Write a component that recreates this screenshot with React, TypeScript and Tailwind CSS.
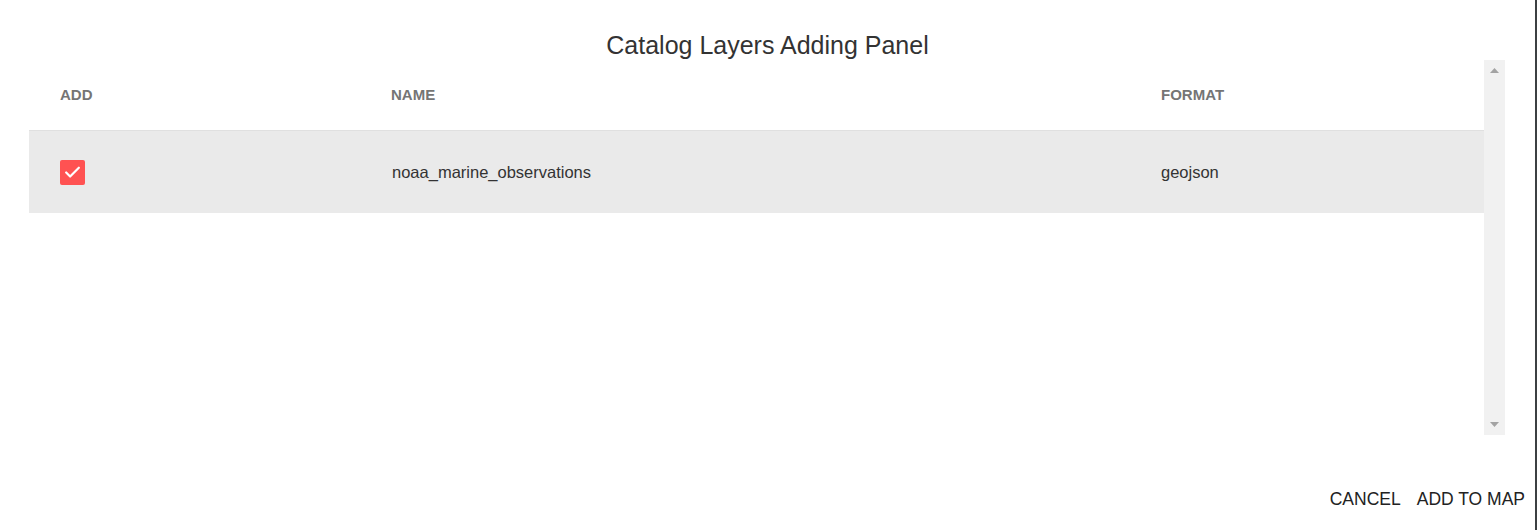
import { Check } from 'lucide-react'

const LAYERS = [{ name: 'noaa_marine_observations', format: 'geojson', checked: true }]

function ScrollTrack() {
  return (
    <div className="w-[21px] bg-[#f1f1f1] flex flex-col items-center justify-between py-[8px]">
      <svg width="9" height="5" viewBox="0 0 9 5">
        <path d="M0 5 L4.5 0 L9 5 Z" fill="#a3a3a3" />
      </svg>
      <svg width="9" height="5" viewBox="0 0 9 5">
        <path d="M0 0 L9 0 L4.5 5 Z" fill="#a3a3a3" />
      </svg>
    </div>
  )
}

export default function App() {
  return (
    <div className="h-[530px] w-full bg-white flex font-['Liberation_Sans',Arial,sans-serif]">
      <div className="flex-1 flex flex-col">
        <h2 className="text-center text-[25px] text-[#333] pt-[30px] leading-[30px]">Catalog Layers Adding Panel</h2>
        <div className="flex pl-[29px] pr-[30px] h-[375px]">
          <div className="flex-1">
            <div className="grid grid-cols-[332px_770px_1fr] h-[71px] items-center border-b border-[#e0e0e0] text-[15px] font-bold text-[#757575]">
              <div className="pl-[31px]">ADD</div>
              <div className="pl-[30px]">NAME</div>
              <div className="pl-[30px]">FORMAT</div>
            </div>
            {LAYERS.map((l) => (
              <div key={l.name} className="grid grid-cols-[332px_770px_1fr] h-[82px] items-center bg-[#eaeaea] text-[16.5px] text-[#333]">
                <div className="pl-[31px]">
                  <span className="w-[25px] h-[25px] rounded-[2px] bg-[#ff5252] flex items-center justify-center">
                    {l.checked && <Check className="w-[19px] h-[19px] text-white" strokeWidth={2.8} />}
                  </span>
                </div>
                <div className="pl-[31px]">{l.name}</div>
                <div className="pl-[30px]">{l.format}</div>
              </div>
            ))}
          </div>
          <ScrollTrack />
        </div>
        <div className="flex justify-end items-center gap-[16px] pr-[10px] mt-[51px] text-[17.5px] text-[#222]">
          <button type="button">CANCEL</button>
          <button type="button">ADD TO MAP</button>
        </div>
      </div>
      <div className="w-[2px] bg-[#3c4043]" />
    </div>
  )
}
